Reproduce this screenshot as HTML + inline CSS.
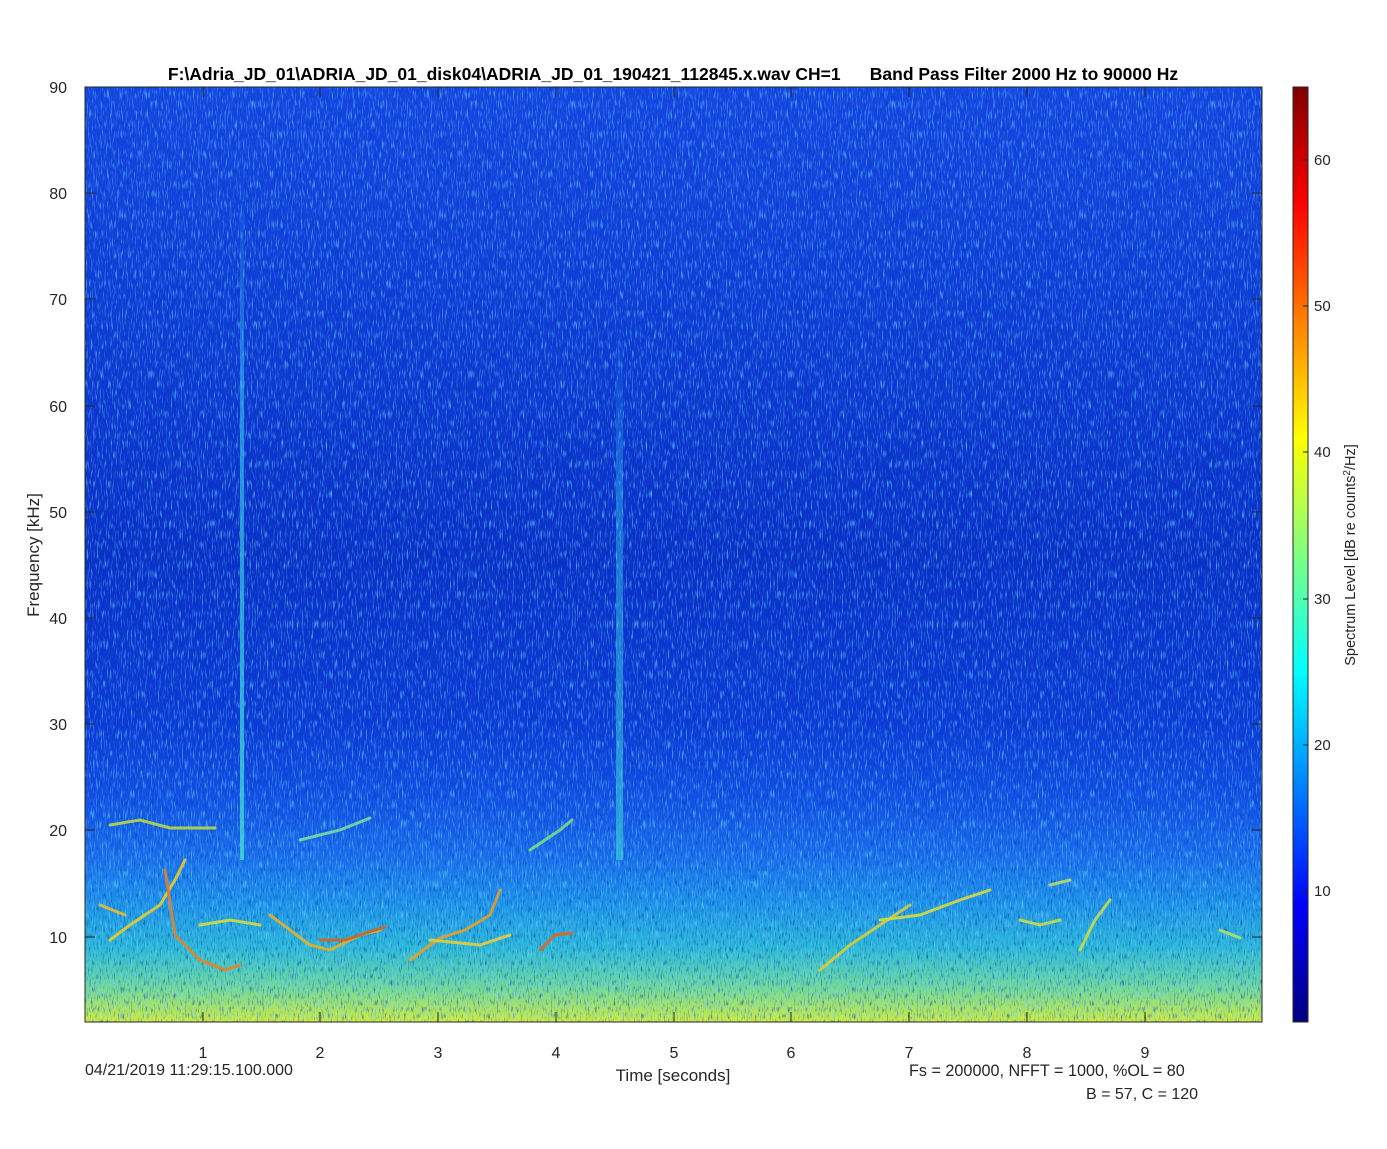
<!DOCTYPE html>
<html><head><meta charset="utf-8"><style>
html,body{margin:0;padding:0;background:#fff;width:1387px;height:1149px;overflow:hidden}
svg text{font-family:"Liberation Sans",Arial,sans-serif;fill:#262626}
</style></head><body>
<svg width="1387" height="1149" viewBox="0 0 1387 1149" xmlns="http://www.w3.org/2000/svg">
<defs>
<linearGradient id="bg" x1="0" y1="0" x2="0" y2="1">
<stop offset="0" stop-color="#1646e2"/>
<stop offset="0.2" stop-color="#103ed8"/>
<stop offset="0.5" stop-color="#0a30c8"/>
<stop offset="0.68" stop-color="#0c3ad6"/>
<stop offset="0.76" stop-color="#1250e4"/>
<stop offset="0.82" stop-color="#1a6cec"/>
<stop offset="0.87" stop-color="#1e90ea"/>
<stop offset="0.92" stop-color="#2cb8d8"/>
<stop offset="0.96" stop-color="#6cd8a0"/>
<stop offset="1" stop-color="#d0ec40"/>
</linearGradient>
<linearGradient id="jet" x1="0" y1="0" x2="0" y2="1">
<stop offset="0" stop-color="#800000"/>
<stop offset="0.125" stop-color="#ff0000"/>
<stop offset="0.375" stop-color="#ffff00"/>
<stop offset="0.625" stop-color="#00ffff"/>
<stop offset="0.875" stop-color="#0000ff"/>
<stop offset="1" stop-color="#000080"/>
</linearGradient>
<linearGradient id="st" x1="0" y1="0" x2="0" y2="1">
<stop offset="0" stop-color="#30b0f0" stop-opacity="0"/>
<stop offset="0.3" stop-color="#30c0f0" stop-opacity="0.6"/>
<stop offset="1" stop-color="#40e0d0" stop-opacity="0.8"/>
</linearGradient>
<filter id="noise" x="0" y="0" width="100%" height="100%">
<feTurbulence type="fractalNoise" baseFrequency="0.8 0.1" numOctaves="2" seed="3"/>
<feColorMatrix type="matrix" values="0 0 0 0 0.15  0 0 0 0 0.65  0 0 0 0 1  0 0 0 3 -1.6"/>
</filter>
<filter id="noise2" x="0" y="0" width="100%" height="100%">
<feTurbulence type="fractalNoise" baseFrequency="0.7 0.15" numOctaves="2" seed="11"/>
<feColorMatrix type="matrix" values="0 0 0 0 0  0 0 0 0 0.05  0 0 0 0 0.45  0 0 0 3 -1.6"/>
</filter>
</defs>
<rect x="85" y="87" width="1177" height="935" fill="url(#bg)"/>
<rect x="85" y="87" width="1177" height="935" filter="url(#noise2)" opacity="0.7"/>
<rect x="85" y="87" width="1177" height="935" filter="url(#noise)" opacity="0.8"/>
<rect x="240" y="180" width="4" height="680" fill="url(#st)"/>
<rect x="616" y="330" width="7" height="530" fill="url(#st)" opacity="0.7"/>
<g fill="none" stroke-linecap="round" stroke-width="3" opacity="0.85">
<path d="M110,940 L130,925 160,905 175,880 185,860" stroke="#f0d020"/>
<path d="M165,870 L175,935 200,960 225,970 240,965" stroke="#f08020"/>
<path d="M100,905 L125,915" stroke="#f0c020"/>
<path d="M110,825 L140,820 170,828 215,828" stroke="#c0e040"/>
<path d="M270,915 L310,945 330,950 360,935 380,930" stroke="#f0b020"/>
<path d="M320,940 L345,940 375,930 385,927" stroke="#e06010"/>
<path d="M200,925 L230,920 260,925" stroke="#e0e030"/>
<path d="M410,960 L440,938 465,930 490,915 500,890" stroke="#f0a020"/>
<path d="M430,940 L480,945 510,935" stroke="#f0d030"/>
<path d="M540,950 L555,935 572,933" stroke="#f06010"/>
<path d="M530,850 L560,830 572,820" stroke="#80e080"/>
<path d="M820,970 L850,945 880,925 910,905" stroke="#e0d030"/>
<path d="M880,920 L920,915 960,900 990,890" stroke="#e0e030"/>
<path d="M1020,920 L1040,925 1060,920" stroke="#d0e040"/>
<path d="M1080,950 L1095,920 1110,900" stroke="#d0e040"/>
<path d="M1050,885 L1070,880" stroke="#c0e060"/>
<path d="M1220,930 L1240,938" stroke="#c0e060"/>
<path d="M300,840 L340,830 370,818" stroke="#80e0a0"/>
</g>
<rect x="85" y="87" width="1177" height="935" fill="none" stroke="#262626" stroke-width="1"/>
<g stroke="#262626" stroke-width="1">
<path d="M85,193h10M85,299h10M85,406h10M85,512h10M85,618h10M85,724h10M85,830h10M85,937h10"/>
<path d="M1262,193h-10M1262,299h-10M1262,406h-10M1262,512h-10M1262,618h-10M1262,724h-10M1262,830h-10M1262,937h-10"/>
<path d="M203,1022v-10M320,1022v-10M438,1022v-10M556,1022v-10M674,1022v-10M791,1022v-10M909,1022v-10M1027,1022v-10M1145,1022v-10"/>
<path d="M203,87v10M320,87v10M438,87v10M556,87v10M674,87v10M791,87v10M909,87v10M1027,87v10M1145,87v10"/>
</g>
<g font-size="16" text-anchor="end">
<text x="67" y="93">90</text><text x="67" y="199">80</text><text x="67" y="305">70</text><text x="67" y="412">60</text><text x="67" y="518">50</text><text x="67" y="624">40</text><text x="67" y="730">30</text><text x="67" y="836">20</text><text x="67" y="943">10</text>
</g>
<g font-size="16" text-anchor="middle">
<text x="203" y="1058">1</text><text x="320" y="1058">2</text><text x="438" y="1058">3</text><text x="556" y="1058">4</text><text x="674" y="1058">5</text><text x="791" y="1058">6</text><text x="909" y="1058">7</text><text x="1027" y="1058">8</text><text x="1145" y="1058">9</text>
</g>
<text x="673" y="1081" font-size="17" text-anchor="middle">Time [seconds]</text>
<text x="85" y="1075" font-size="16">04/21/2019 11:29:15.100.000</text>
<text x="909" y="1076" font-size="16.2">Fs = 200000, NFFT = 1000, %OL = 80</text>
<text x="1086" y="1099" font-size="16">B = 57, C = 120</text>
<text transform="translate(39,555) rotate(-90)" font-size="17" text-anchor="middle">Frequency [kHz]</text>
<text x="673" y="80" font-size="17.5" font-weight="bold" text-anchor="middle" style="fill:#000">F:\Adria_JD_01\ADRIA_JD_01_disk04\ADRIA_JD_01_190421_112845.x.wav CH=1&#160;&#160;&#160;&#160;&#160;&#160;Band Pass Filter 2000 Hz to 90000 Hz</text>
<rect x="1293" y="87" width="15" height="935" fill="url(#jet)" stroke="#262626" stroke-width="1"/>
<g stroke="#262626"><path d="M1308,160h-5M1308,306h-5M1308,452h-5M1308,599h-5M1308,745h-5M1308,891h-5"/></g>
<g font-size="15">
<text x="1314" y="165">60</text><text x="1314" y="311">50</text><text x="1314" y="457">40</text><text x="1314" y="604">30</text><text x="1314" y="750">20</text><text x="1314" y="896">10</text>
</g>
<text transform="translate(1355,555) rotate(-90)" font-size="14.5" text-anchor="middle">Spectrum Level [dB re counts<tspan dy="-5" font-size="10">2</tspan><tspan dy="5">/Hz]</tspan></text>
</svg>
</body></html>
